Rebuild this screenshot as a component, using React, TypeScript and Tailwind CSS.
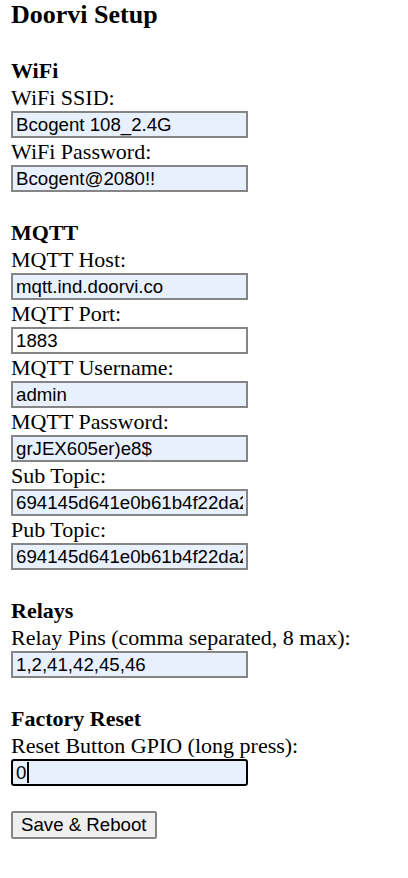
const serif = { fontFamily: '"Liberation Serif", "Times New Roman", serif' };

function Field({ label, value, filled = true, focused = false }: { label: string; value: string; filled?: boolean; focused?: boolean }) {
  return (
    <div className="flex flex-col">
      <div className="text-[22px] leading-[27px] text-black whitespace-nowrap">{label}</div>
      {focused ? (
        <div className="w-[237px] h-[27px] border-2 border-black rounded-[3px] bg-[#e8f0fe] flex items-center pl-[3px] text-[18.67px] text-black" style={{ fontFamily: '"Liberation Sans", Arial, sans-serif' }}>
          <span>{value}</span>
          <span className="w-[2px] h-[21px] bg-black ml-[1px]"></span>
        </div>
      ) : (
        <input
          readOnly
          value={value}
          className={`w-[237px] h-[27px] border-2 border-[#858585] px-[3px] text-[18.67px] text-black outline-none ${filled ? 'bg-[#e8f0fe]' : 'bg-white'}`}
          style={{ fontFamily: '"Liberation Sans", Arial, sans-serif' }}
        />
      )}
    </div>
  );
}

function Section({ title, children }: { title: string; children: React.ReactNode }) {
  return (
    <div className="flex flex-col">
      <h4 className="text-[22px] leading-[27px] font-bold text-black">{title}</h4>
      {children}
    </div>
  );
}

export default function App() {
  return (
    <div className="min-h-screen bg-white pl-[11px] flex flex-col gap-[27px]" style={serif}>
      <h3 className="text-[26px] leading-[30px] font-bold text-black">Doorvi Setup</h3>
      <Section title="WiFi">
        <Field label="WiFi SSID:" value="Bcogent 108_2.4G" />
        <Field label="WiFi Password:" value="Bcogent@2080!!" />
      </Section>
      <Section title="MQTT">
        <Field label="MQTT Host:" value="mqtt.ind.doorvi.co" />
        <Field label="MQTT Port:" value="1883" filled={false} />
        <Field label="MQTT Username:" value="admin" />
        <Field label="MQTT Password:" value="grJEX605er)e8$" />
        <Field label="Sub Topic:" value="694145d641e0b61b4f22da2" />
        <Field label="Pub Topic:" value="694145d641e0b61b4f22da2" />
      </Section>
      <Section title="Relays">
        <Field label="Relay Pins (comma separated, 8 max):" value="1,2,41,42,45,46" />
      </Section>
      <Section title="Factory Reset">
        <Field label="Reset Button GPIO (long press):" value="0" focused />
      </Section>
      <div className="-mt-[2px]">
        <button className="h-[28px] px-[8px] border-2 border-[#858585] rounded-[2px] bg-[#efefef] text-[18.67px] text-black leading-none" style={{ fontFamily: '"Liberation Sans", Arial, sans-serif' }}>
          Save &amp; Reboot
        </button>
      </div>
    </div>
  );
}
